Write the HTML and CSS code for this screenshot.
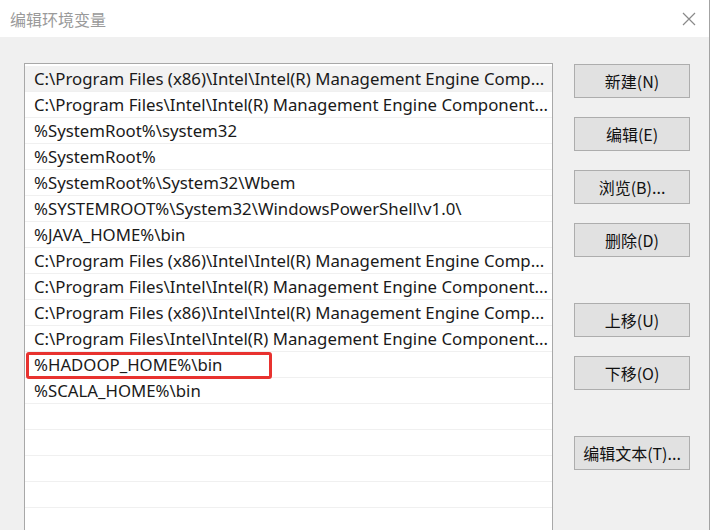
FILE: index.html
```html
<!DOCTYPE html>
<html lang="zh-CN">
<head>
  <meta charset="UTF-8">
  <title>编辑环境变量</title>
  <link rel="stylesheet" href="styles.css">
</head>
<body>
  <div class="window">
    <div class="titlebar">
      <span class="title">编辑环境变量</span>
      <svg class="close" width="14" height="14" viewBox="0 0 14 14">
        <path d="M1 1 L13 13 M13 1 L1 13" stroke="#8a8a8a" stroke-width="1.2" fill="none"/>
      </svg>
    </div>

    <div class="content">
      <div class="list">
        <div class="row hover">C:\Program Files (x86)\Intel\Intel(R) Management Engine Comp...</div>
        <div class="row">C:\Program Files\Intel\Intel(R) Management Engine Component...</div>
        <div class="row">%SystemRoot%\system32</div>
        <div class="row">%SystemRoot%</div>
        <div class="row">%SystemRoot%\System32\Wbem</div>
        <div class="row">%SYSTEMROOT%\System32\WindowsPowerShell\v1.0\</div>
        <div class="row">%JAVA_HOME%\bin</div>
        <div class="row">C:\Program Files (x86)\Intel\Intel(R) Management Engine Comp...</div>
        <div class="row">C:\Program Files\Intel\Intel(R) Management Engine Component...</div>
        <div class="row">C:\Program Files (x86)\Intel\Intel(R) Management Engine Comp...</div>
        <div class="row">C:\Program Files\Intel\Intel(R) Management Engine Component...</div>
        <div class="row marked">%HADOOP_HOME%\bin<span class="mark"></span></div>
        <div class="row">%SCALA_HOME%\bin</div>
        <div class="row"></div>
        <div class="row"></div>
        <div class="row"></div>
        <div class="row"></div>
        <div class="row"></div>
      </div>

      <div class="buttons">
        <button>新建(N)</button>
        <button>编辑(E)</button>
        <button>浏览(B)...</button>
        <button>删除(D)</button>
        <button class="gap">上移(U)</button>
        <button>下移(O)</button>
        <button class="gap">编辑文本(T)...</button>
      </div>
    </div>
  </div>
</body>
</html>
```

FILE: styles.css
```css
body {
  margin: 0;
  background: #ffffff;
  font-family: "Noto Sans", "Noto Sans CJK SC", sans-serif;
  overflow: hidden;
}
.window {
  width: 709px;
  height: 530px;
  border-right: 1px solid #a3a3a3;
  display: flex;
  flex-direction: column;
}
.titlebar {
  height: 37px;
  background: #ffffff;
  display: flex;
  align-items: center;
  justify-content: space-between;
  padding: 0 13px 0 10px;
}
.title {
  font-family: "Noto Sans CJK SC", sans-serif;
  font-size: 16px;
  color: #9a9a9a;
}
.content {
  flex: 1;
  background: #f0f0f0;
  display: flex;
  align-items: flex-start;
  padding: 26px 0 0 24px;
  overflow: hidden;
}
.list {
  width: 527px;
  height: 480px;
  background: #ffffff;
  border: 1px solid #a8a8a8;
  padding-top: 2px;
  overflow: hidden;
}
.row {
  position: relative;
  height: 25px;
  line-height: 26px;
  border-bottom: 1px solid #f0f0f0;
  padding-left: 9px;
  font-size: 16.8px;
  color: #1a1a1a;
  white-space: nowrap;
}
.row.hover {
  background: #f2f2f2;
}
.mark {
  position: absolute;
  left: 1px;
  top: 0;
  width: 240px;
  height: 21px;
  border: 3px solid #e8322f;
  border-radius: 3px;
}
.buttons {
  display: flex;
  flex-direction: column;
  gap: 19px;
  margin-left: 21px;
  padding-top: 1px;
}
.buttons button {
  width: 116px;
  height: 34px;
  background: #e1e1e1;
  border: 1px solid #adadad;
  font-family: "Noto Sans CJK SC", sans-serif;
  font-size: 16px;
  color: #111111;
  padding: 0;
}
.buttons .gap {
  margin-top: 27px;
}
```
